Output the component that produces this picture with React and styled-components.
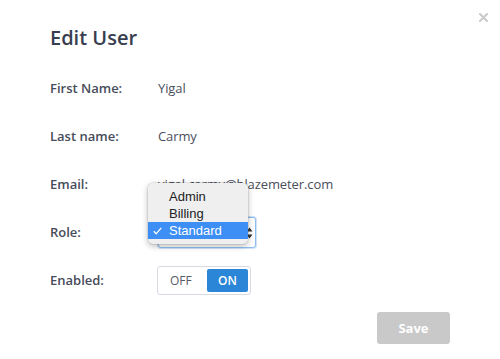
import React from 'react';
import styled, { createGlobalStyle } from 'styled-components';

const GlobalStyle = createGlobalStyle`
  body {
    margin: 0;
    background: #ffffff;
    font-family: "Open Sans", "Liberation Sans", sans-serif;
  }
`;

const Modal = styled.div`
  position: relative;
  width: 500px;
  height: 359px;
  box-sizing: border-box;
  padding: 26px 50px 0 50px;
  background: #ffffff;
`;

const CloseButton = styled.div`
  position: absolute;
  top: 12px;
  right: 12px;
  width: 10px;
  height: 10px;
  display: flex;
  align-items: center;
  justify-content: center;
  cursor: pointer;
`;

const Title = styled.h2`
  margin: 0;
  font-size: 20px;
  line-height: 24px;
  font-weight: 600;
  color: #383d50;
`;

const Form = styled.div`
  margin-top: 14px;
  display: grid;
  grid-template-columns: 108px 1fr;
  grid-auto-rows: 48px;
  align-items: center;
`;

const Label = styled.div`
  font-size: 13px;
  font-weight: 600;
  color: #474c5a;
`;

const Value = styled.div`
  font-size: 13px;
  letter-spacing: -0.1px;
  color: #4a4e5c;
`;

const SelectWrap = styled.div`
  position: relative;
  width: 98px;
  height: 31px;
  box-sizing: border-box;
  border: 1px solid #8dbdf0;
  border-radius: 3px;
  box-shadow: 0 0 0 1px rgba(120, 175, 235, 0.35);
  background: #fff;
`;

const Arrows = styled.div`
  position: absolute;
  right: 2px;
  top: 8px;
  display: flex;
  flex-direction: column;
`;

const Menu = styled.div`
  position: absolute;
  left: -11px;
  top: -35px;
  width: 100px;
  box-sizing: border-box;
  padding: 5px 0;
  background: #efefef;
  border-radius: 5px;
  box-shadow: 0 2px 6px rgba(0, 0, 0, 0.28), 0 0 0 0.5px rgba(0, 0, 0, 0.12);
  font-family: "Liberation Sans", Arial, sans-serif;
  font-size: 13px;
  z-index: 2;
`;

const MenuItem = styled.div`
  position: relative;
  height: 17px;
  line-height: 17px;
  padding-left: 21px;
  color: ${p => (p.selected ? '#ffffff' : '#222222')};
  background: ${p => (p.selected ? '#3d8ff5' : 'transparent')};
`;

const Check = styled.svg`
  position: absolute;
  left: 5px;
  top: 5px;
`;

const Toggle = styled.div`
  margin-left: -1px;
  width: 94px;
  height: 29px;
  box-sizing: border-box;
  padding: 2px 2px 2px 12px;
  border: 1px solid #d6dbe2;
  border-radius: 3px;
  display: flex;
  align-items: center;
  justify-content: space-between;
`;

const ToggleOption = styled.div`
  height: 23px;
  line-height: 23px;
  width: ${p => (p.active ? '41px' : 'auto')};
  box-sizing: border-box;
  text-align: center;
  font-size: 12px;
  font-weight: ${p => (p.active ? 600 : 400)};
  color: ${p => (p.active ? '#ffffff' : '#555a66')};
  background: ${p => (p.active ? '#2b86d8' : 'transparent')};
  border-radius: 2px;
`;

const Footer = styled.div`
  margin-top: 8px;
  display: flex;
  justify-content: flex-end;
`;

const SaveButton = styled.button`
  width: 73px;
  height: 32px;
  border: none;
  border-radius: 3px;
  background: #c9c9c9;
  color: #ffffff;
  font-family: "Open Sans", sans-serif;
  font-size: 13px;
  font-weight: 700;
  cursor: default;
`;

export default function App() {
  return (
    <>
      <GlobalStyle />
      <Modal>
        <CloseButton>
          <svg width="9" height="9" viewBox="0 0 9 9">
            <path d="M1 1 L8 8 M8 1 L1 8" stroke="#c9c9c9" strokeWidth="2" strokeLinecap="round" />
          </svg>
        </CloseButton>
        <Title>Edit User</Title>
        <Form>
          <Label>First Name:</Label>
          <Value>Yigal</Value>
          <Label>Last name:</Label>
          <Value>Carmy</Value>
          <Label>Email:</Label>
          <Value>yigal.carmy@blazemeter.com</Value>
          <Label>Role:</Label>
          <div>
            <SelectWrap>
              <Arrows>
                <svg width="7" height="14" viewBox="0 0 7 14">
                  <path d="M0.5 5.5 L3.5 1.5 L6.5 5.5 Z M0.5 8.5 L3.5 12.5 L6.5 8.5 Z" fill="#333" />
                </svg>
              </Arrows>
              <Menu>
                <MenuItem>Admin</MenuItem>
                <MenuItem>Billing</MenuItem>
                <MenuItem selected>
                  <Check width="9" height="8" viewBox="0 0 9 8">
                    <path d="M0.8 4.2 L3.2 6.8 L8.2 0.8" stroke="#fff" strokeWidth="1.3" fill="none" />
                  </Check>
                  Standard
                </MenuItem>
              </Menu>
            </SelectWrap>
          </div>
          <Label>Enabled:</Label>
          <div>
            <Toggle>
              <ToggleOption>OFF</ToggleOption>
              <ToggleOption active>ON</ToggleOption>
            </Toggle>
          </div>
        </Form>
        <Footer>
          <SaveButton>Save</SaveButton>
        </Footer>
      </Modal>
    </>
  );
}
